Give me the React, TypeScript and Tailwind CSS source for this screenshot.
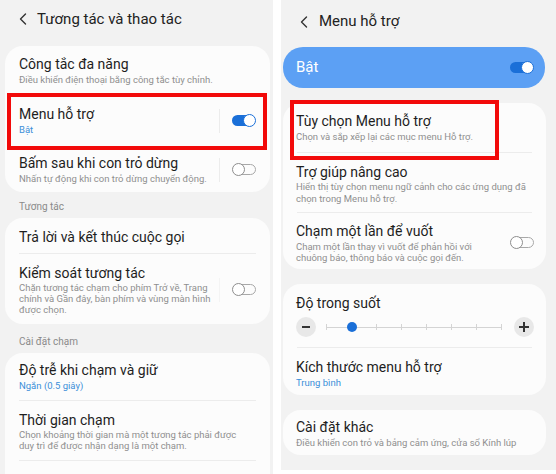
import React from "react";

const font = { fontFamily: "Roboto, 'Noto Sans', sans-serif" };

function Chevron() {
  return (
    <svg width="8" height="12" viewBox="0 0 8 12" className="shrink-0">
      <path d="M6.5 1 L1.5 6 L6.5 11" fill="none" stroke="#333" strokeWidth="1.4" strokeLinecap="round" strokeLinejoin="round" />
    </svg>
  );
}

function Toggle({ on }: { on?: boolean }) {
  if (on) {
    return (
      <div className="relative w-[24px] h-[13px] shrink-0">
        <div className="absolute left-0 top-[1px] w-[22px] h-[11px] rounded-full bg-[#1a6fd8]" />
        <div className="absolute right-0 top-0 w-[13px] h-[13px] rounded-full bg-white border-[1.5px] border-[#1a6fd8]" />
      </div>
    );
  }
  return (
    <div className="relative w-[24px] h-[13px] shrink-0">
      <div className="absolute left-[2px] top-[1px] w-[22px] h-[11px] rounded-full border border-[#a8a8a8]" />
      <div className="absolute left-0 top-0 w-[13px] h-[13px] rounded-full bg-white border-[1.3px] border-[#8e8e8e]" />
    </div>
  );
}

function Title({ children }: { children: React.ReactNode }) {
  return <div className="text-[14px] leading-[18px] text-[#1e1e1e] whitespace-nowrap">{children}</div>;
}

function Sub({ children, lh = "leading-[13px]" }: { children: React.ReactNode; lh?: string }) {
  return <div className={`text-[9.5px] ${lh} text-[#8f8f8f]`}>{children}</div>;
}

function Blue({ children }: { children: React.ReactNode }) {
  return <div className="text-[9.5px] leading-[13px] text-[#3b8fd9]">{children}</div>;
}

function Divider() {
  return <div className="h-px bg-[#ececec] mx-[14px]" />;
}

function RedBox({ className }: { className: string }) {
  return <div className={`absolute border-[4px] border-[#f20a0a] pointer-events-none ${className}`} />;
}

export default function App() {
  return (
    <div className="w-[556px] h-[474px] bg-white flex overflow-hidden" style={font}>
      {/* Left screen */}
      <div className="w-[273px] h-[474px] bg-[#f2f2f2] overflow-hidden shrink-0">
        <div className="h-[46px] flex items-center gap-[10px] pl-[19px] pb-[8px]">
          <Chevron />
          <div className="text-[15px] text-[#222]">Tương tác và thao tác</div>
        </div>
        <div className="ml-[5px] mr-[3px] bg-[#fcfcfc] rounded-[18px]">
          <div className="pl-[14px] pr-[14px] pt-[9px] pb-[9px] h-[49px]">
            <Title>Công tắc đa năng</Title>
            <Sub>Điều khiển điện thoại bằng công tắc tùy chỉnh.</Sub>
          </div>
          <div className="relative flex items-center pl-[14px] pr-[14px] pt-[10px] pb-[9px] h-[50px]">
            <div className="flex-1">
              <Title>Menu hỗ trợ</Title>
              <Blue>Bật</Blue>
            </div>
            <div className="w-px h-[24px] bg-[#ececec] mr-[12px]" />
            <Toggle on />
            <RedBox className="left-[2px] right-[3px] top-[-2px] bottom-[-5px]" />
          </div>
          <div className="flex items-center pl-[14px] pr-[14px] pt-[10px] pb-[8px] h-[47px]">
            <div className="flex-1">
              <Title>Bấm sau khi con trỏ dừng</Title>
              <Sub>Nhấn tự động khi con trỏ dừng chuyển động.</Sub>
            </div>
            <div className="w-px h-[24px] bg-[#ececec] mr-[12px]" />
            <Toggle />
          </div>
        </div>
        <div className="pl-[19px] pt-[9px] pb-[5px] text-[10px] leading-[12px] text-[#8a8a8a]">Tương tác</div>
        <div className="ml-[5px] mr-[3px] bg-[#fcfcfc] rounded-[18px]">
          <div className="pl-[14px] pr-[14px] pt-[10px] pb-[7px] h-[35px]">
            <Title>Trả lời và kết thúc cuộc gọi</Title>
          </div>
          <Divider />
          <div className="flex items-center pl-[14px] pr-[14px] pt-[10px] pb-[9px]">
            <div className="flex-1 pr-[4px]">
              <Title>Kiểm soát tương tác</Title>
              <Sub lh="leading-[11px]">Chặn tương tác chạm cho phím Trở về, Trang chính và Gần đây, bàn phím và vùng màn hình được chọn.</Sub>
            </div>
            <div className="w-px h-[24px] bg-[#f4f4f4] mr-[12px]" />
            <Toggle />
          </div>
        </div>
        <div className="pl-[19px] pt-[12px] pb-[5px] text-[10px] leading-[12px] text-[#8a8a8a]">Cài đặt chạm</div>
        <div className="ml-[5px] mr-[3px] bg-[#fcfcfc] rounded-t-[18px] h-[200px]">
          <div className="pl-[14px] pr-[14px] pt-[8px] pb-[8px] h-[47px]">
            <Title>Độ trễ khi chạm và giữ</Title>
            <Blue>Ngắn (0.5 giây)</Blue>
          </div>
          <Divider />
          <div className="pl-[14px] pr-[30px] pt-[10px] pb-[10px] h-[59px]">
            <Title>Thời gian chạm</Title>
            <Sub lh="leading-[11px]">Chọn khoảng thời gian mà một tương tác phải được duy trì để được nhận dạng là một chạm.</Sub>
          </div>
          <Divider />
        </div>
      </div>

      <div className="w-[8px] shrink-0" />

      {/* Right screen */}
      <div className="w-[275px] h-[470px] bg-[#f2f2f2] overflow-hidden shrink-0">
        <div className="h-[47px] flex items-center gap-[11px] pl-[19px] pb-[4px]">
          <Chevron />
          <div className="text-[15px] text-[#222]">Menu hỗ trợ</div>
        </div>
        <div className="ml-[2px] mr-[11px] h-[41px] rounded-[20px] bg-[#5ca0f4] flex items-center pl-[13px] pr-[11px]">
          <div className="flex-1 text-[15px] text-white">Bật</div>
          <Toggle on />
        </div>
        <div className="ml-[2px] mr-[10px] mt-[15px] bg-[#fcfcfc] rounded-[18px]">
          <div className="relative pl-[13px] pr-[13px] pt-[9px] pb-[9px] h-[49px]">
            <Title>Tùy chọn Menu hỗ trợ</Title>
            <Sub>Chọn và sắp xếp lại các mục menu Hỗ trợ.</Sub>
            <RedBox className="left-[7px] w-[209px] top-[-3px] bottom-[-8px]" />
          </div>
          <Divider />
          <div className="pl-[13px] pr-[14px] pt-[10px] pb-[9px] h-[59px]">
            <Title>Trợ giúp nâng cao</Title>
            <Sub lh="leading-[11.5px]">Hiển thị tùy chọn menu ngữ cảnh cho các ứng dụng đã chọn trong Menu hỗ trợ.</Sub>
          </div>
          <Divider />
          <div className="flex items-center pl-[13px] pr-[12px] pt-[9px] pb-[6px] h-[56px]">
            <div className="flex-1 pr-[30px]">
              <Title>Chạm một lần để vuốt</Title>
              <div className="mt-[1px]">
                <Sub lh="leading-[11.5px]">Chạm một lần thay vì vuốt để phản hồi với chuông báo, thông báo và cuộc gọi đến.</Sub>
              </div>
            </div>
            <Toggle />
          </div>
        </div>
        <div className="ml-[2px] mr-[10px] mt-[15px] bg-[#fcfcfc] rounded-[18px]">
          <div className="pl-[13px] pr-[10px] pt-[10px] pb-[10px]">
            <Title>Độ trong suốt</Title>
            <div className="mt-[5px] h-[20px] flex items-center">
              <div className="w-[20px] h-[20px] rounded-full bg-[#e8e8e8] flex items-center justify-center shrink-0">
                <div className="w-[8px] h-[1.5px] bg-[#333]" />
              </div>
              <div className="relative ml-[10px] w-[176px] h-[20px] shrink-0">
                <div className="absolute left-0 right-0 top-[9.5px] h-[1.5px] bg-[#d4d4d4]" />
                {[0, 25, 50, 75, 100, 125, 150, 175].map((x) => (
                  <div key={x} className="absolute top-[7px] w-px h-[6px] bg-[#d4d4d4]" style={{ left: x }} />
                ))}
                <div className="absolute top-[5px] left-[21px] w-[10px] h-[10px] rounded-full bg-[#1a6fd8]" />
              </div>
              <div className="ml-[12px] w-[20px] h-[20px] rounded-full bg-[#e8e8e8] flex items-center justify-center shrink-0 relative">
                <div className="w-[10px] h-[1.5px] bg-[#333]" />
                <div className="absolute w-[1.5px] h-[10px] bg-[#333]" />
              </div>
            </div>
          </div>
          <Divider />
          <div className="pl-[13px] pr-[13px] pt-[10px] pb-[6px] h-[47px]">
            <Title>Kích thước menu hỗ trợ</Title>
            <Blue>Trung bình</Blue>
          </div>
        </div>
        <div className="ml-[2px] mr-[10px] mt-[15px] bg-[#fcfcfc] rounded-[18px] h-[45px] pl-[13px] pr-[10px] pt-[8px]">
          <Title>Cài đặt khác</Title>
          <Sub>Điều khiển con trỏ và bảng cảm ứng, cửa sổ Kính lúp</Sub>
        </div>
      </div>
    </div>
  );
}
